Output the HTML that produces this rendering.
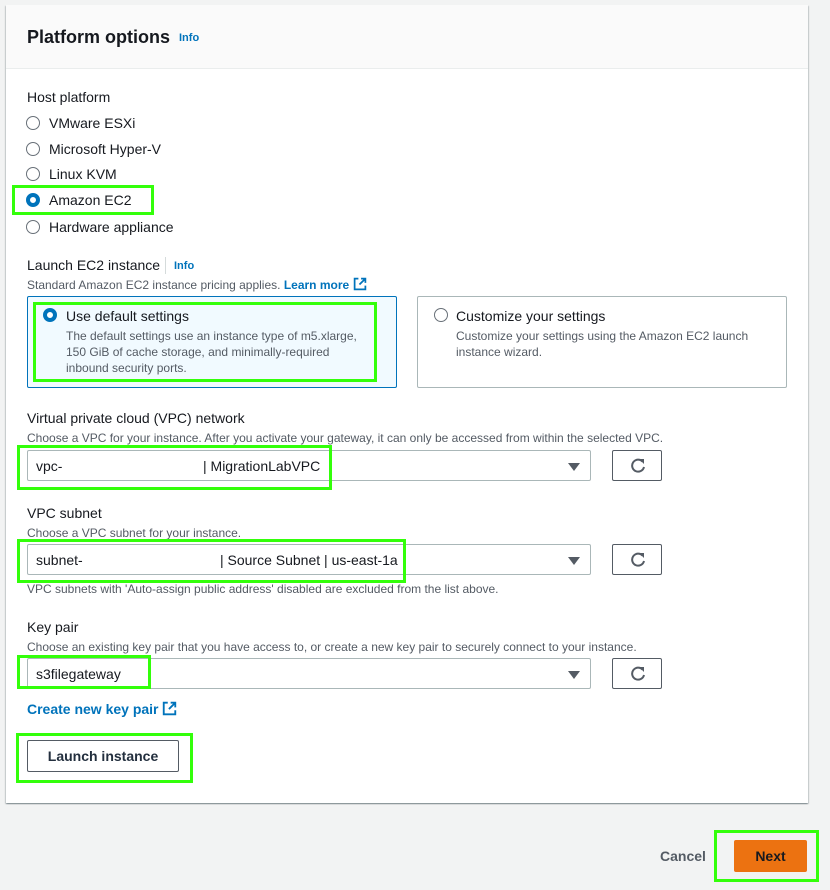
<!DOCTYPE html>
<html><head><meta charset="utf-8"><style>
*{margin:0;padding:0;box-sizing:border-box}
body{width:830px;height:890px;background:#f2f3f3;font-family:"Liberation Sans",Arial,sans-serif;color:#16191f;position:relative;overflow:hidden}
.a{position:absolute;white-space:nowrap}
.panel{position:absolute;left:6px;top:5px;width:802px;height:798px;background:#fff;box-shadow:0 1px 1px 0 rgba(0,28,36,.3),1px 1px 1px 0 rgba(0,28,36,.15),-1px 1px 1px 0 rgba(0,28,36,.15)}
.hdr{position:absolute;left:6px;top:5px;width:802px;height:64px;background:#fafafa;border-bottom:1px solid #eaeded}
.t14{font-size:14px;line-height:18px}
.t12{font-size:12px;line-height:16px;color:#545b64}
.info{font-size:11px;font-weight:bold;color:#0073bb}
.rad{position:absolute;width:14px;height:14px;border-radius:50%;border:1.5px solid #687078;background:#fff}
.rad.on{border:4px solid #0073bb}
.g{position:absolute;border:3px solid #33ff0a}
.sel{position:absolute;left:27px;width:564px;height:31px;border:1px solid #aab7b8;border-radius:2px;background:#fff}
.arr{position:absolute;right:10px;top:12px;width:0;height:0;border-left:6px solid transparent;border-right:6px solid transparent;border-top:8px solid #545b64}
.rf{position:absolute;left:612px;width:50px;height:31px;border:1px solid #545b64;border-radius:2px;background:#fff}
.rf svg{position:absolute;left:15px;top:6px}
</style></head><body>
<div class="panel"></div>
<div class="hdr"></div>
<div class="a" style="left:27px;top:25px;font-size:18px;font-weight:bold;line-height:24px">Platform options</div>
<div class="a info" style="left:179px;top:32px">Info</div>

<div class="a t14" style="left:27px;top:88px">Host platform</div>
<div class="rad" style="left:26px;top:116px"></div><div class="a t14" style="left:49px;top:114px">VMware ESXi</div>
<div class="rad" style="left:26px;top:142px"></div><div class="a t14" style="left:49px;top:140px">Microsoft Hyper-V</div>
<div class="rad" style="left:26px;top:167px"></div><div class="a t14" style="left:49px;top:165px">Linux KVM</div>
<div class="rad on" style="left:26px;top:193px"></div><div class="a t14" style="left:49px;top:191px">Amazon EC2</div>
<div class="rad" style="left:26px;top:220px"></div><div class="a t14" style="left:49px;top:218px">Hardware appliance</div>
<div class="g" style="left:12px;top:185px;width:142px;height:30px"></div>

<div class="a t14" style="left:27px;top:256px">Launch EC2 instance</div>
<div class="a" style="left:165px;top:257px;width:1px;height:17px;background:#d5dbdb"></div>
<div class="a info" style="left:174px;top:260px">Info</div>
<div class="a t12" style="left:27px;top:277px">Standard Amazon EC2 instance pricing applies. <b style="color:#0073bb">Learn more</b> <svg width="14" height="14" viewBox="0 0 13 13" style="vertical-align:-2px"><path d="M5 1.5H1.5v10h10V8M7.5 1.5h4v4M11.5 1.5L6 7" fill="none" stroke="#0073bb" stroke-width="1.6"/></svg></div>

<div class="a" style="left:27px;top:296px;width:370px;height:92px;border:1px solid #0073bb;background:#f1faff;border-radius:2px"></div>
<div class="rad on" style="left:43px;top:308px"></div>
<div class="a t14" style="left:66px;top:307px">Use default settings</div>
<div class="a t12" style="left:66px;top:328px">The default settings use an instance type of m5.xlarge,<br>150 GiB of cache storage, and minimally-required<br>inbound security ports.</div>
<div class="g" style="left:33px;top:302px;width:344px;height:80px"></div>

<div class="a" style="left:417px;top:296px;width:370px;height:92px;border:1px solid #aab7b8;border-radius:2px"></div>
<div class="rad" style="left:434px;top:308px"></div>
<div class="a t14" style="left:456px;top:307px">Customize your settings</div>
<div class="a t12" style="left:456px;top:328px">Customize your settings using the Amazon EC2 launch<br>instance wizard.</div>

<div class="a t14" style="left:27px;top:409px">Virtual private cloud (VPC) network</div>
<div class="a t12" style="left:27px;top:430px">Choose a VPC for your instance. After you activate your gateway, it can only be accessed from within the selected VPC.</div>
<div class="sel" style="top:450px"><div class="a t14" style="left:8px;top:6px">vpc-</div><div class="a t14" style="left:175px;top:6px">| MigrationLabVPC</div><div class="arr"></div></div>
<div class="rf" style="top:450px"><svg width="20" height="18" viewBox="0 0 20 18"><path d="M14.5 4.5A6 6 0 1 0 16 10" fill="none" stroke="#545b64" stroke-width="2"/><path d="M11 2h5v5z" fill="#545b64"/></svg></div>
<div class="g" style="left:17px;top:445px;width:315px;height:45px"></div>

<div class="a t14" style="left:27px;top:504px">VPC subnet</div>
<div class="a t12" style="left:27px;top:525px">Choose a VPC subnet for your instance.</div>
<div class="sel" style="top:544px"><div class="a t14" style="left:8px;top:6px">subnet-</div><div class="a t14" style="left:192px;top:6px">| Source Subnet | us-east-1a</div><div class="arr"></div></div>
<div class="rf" style="top:544px"><svg width="20" height="18" viewBox="0 0 20 18"><path d="M14.5 4.5A6 6 0 1 0 16 10" fill="none" stroke="#545b64" stroke-width="2"/><path d="M11 2h5v5z" fill="#545b64"/></svg></div>
<div class="g" style="left:17px;top:539px;width:389px;height:44px"></div>
<div class="a t12" style="left:27px;top:581px">VPC subnets with 'Auto-assign public address' disabled are excluded from the list above.</div>

<div class="a t14" style="left:27px;top:618px">Key pair</div>
<div class="a t12" style="left:27px;top:639px">Choose an existing key pair that you have access to, or create a new key pair to securely connect to your instance.</div>
<div class="sel" style="top:658px"><div class="a t14" style="left:8px;top:6px">s3filegateway</div><div class="arr"></div></div>
<div class="rf" style="top:658px"><svg width="20" height="18" viewBox="0 0 20 18"><path d="M14.5 4.5A6 6 0 1 0 16 10" fill="none" stroke="#545b64" stroke-width="2"/><path d="M11 2h5v5z" fill="#545b64"/></svg></div>
<div class="g" style="left:17px;top:655px;width:134px;height:34px"></div>

<div class="a t14" style="left:27px;top:700px;color:#0073bb;font-weight:bold">Create new key pair <svg width="15" height="15" viewBox="0 0 13 13" style="vertical-align:-2px"><path d="M5 1.5H1.5v10h10V8M7.5 1.5h4v4M11.5 1.5L6 7" fill="none" stroke="#0073bb" stroke-width="1.6"/></svg></div>

<div class="a" style="left:27px;top:740px;width:152px;height:32px;border:1px solid #545b64;border-radius:2px;background:#fff;text-align:center;font-size:14px;font-weight:bold;line-height:30px;color:#232f3e">Launch instance</div>
<div class="g" style="left:16px;top:733px;width:177px;height:50px"></div>

<div class="a t14" style="left:660px;top:847px;font-weight:bold;color:#545b64">Cancel</div>
<div class="a" style="left:734px;top:840px;width:73px;height:32px;background:#ec7211;border-radius:2px;text-align:center;font-size:14px;font-weight:bold;line-height:32px;color:#16191f">Next</div>
<div class="g" style="left:714px;top:830px;width:105px;height:52px"></div>
</body></html>
